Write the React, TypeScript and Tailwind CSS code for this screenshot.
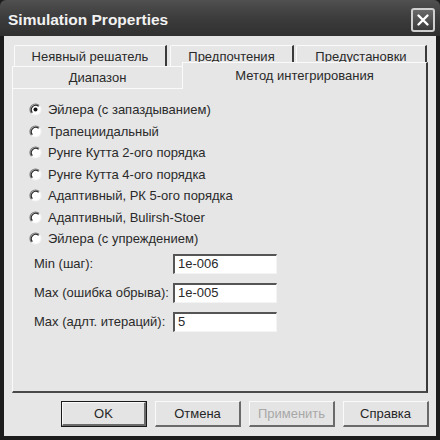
import React from "react";

function Radio({ checked }: { checked?: boolean }) {
  return (
    <svg width="13" height="13" viewBox="0 0 13 13" className="shrink-0">
      <circle cx="6.5" cy="6.5" r="5.5" fill="#ffffff" />
      <path d="M2.6 10.4 A5.5 5.5 0 0 1 10.4 2.6" fill="none" stroke="#7a7a7a" strokeWidth="1.2" />
      <path d="M3.4 9.6 A4.4 4.4 0 0 1 9.6 3.4" fill="none" stroke="#2a2a2a" strokeWidth="1.2" />
      <path d="M10.4 2.6 A5.5 5.5 0 0 1 2.6 10.4" fill="none" stroke="#f4f4f4" strokeWidth="1.2" />
      {checked && <circle cx="6.5" cy="6.5" r="2" fill="#111" />}
    </svg>
  );
}

function Btn({ label, def, disabled }: { label: string; def?: boolean; disabled?: boolean }) {
  return (
    <div
      className={
        "w-[86px] h-[26px] " +
        (def ? "border border-[#1a1a1a]" : "")
      }
    >
      <div className="w-full h-full border-t border-l border-t-[#fafafa] border-l-[#fafafa] border-b-2 border-r-2 border-b-[#6a6a6a] border-r-[#6a6a6a] bg-[#e4e4e4] flex items-center justify-center">
        <span className={"text-[13px] " + (disabled ? "text-[#a8a8a8]" : "text-[#262626]")}>{label}</span>
      </div>
    </div>
  );
}

function Field({ label, value }: { label: string; value: string }) {
  return (
    <div className="flex items-center h-[20px]">
      <span className="w-[139px] text-[13px] text-[#2a2a2a]">{label}</span>
      <div className="w-[104px] h-[20px] bg-white border-t-2 border-l-2 border-t-[#555] border-l-[#555] border-b border-r border-b-[#f4f4f4] border-r-[#f4f4f4] flex items-center pl-[3px]">
        <span className="text-[13px] text-[#2a2a2a]">{value}</span>
      </div>
    </div>
  );
}

export default function App() {
  const radios = [
    "Эйлера (с запаздыванием)",
    "Трапециидальный",
    "Рунге Кутта 2-ого порядка",
    "Рунге Кутта 4-ого порядка",
    "Адаптивный, РК 5-ого порядка",
    "Адаптивный, Bulirsh-Stoer",
    "Эйлера (с упреждением)",
  ];
  return (
    <div className="w-[440px] h-[440px] bg-[#1c1c1c] flex flex-col font-['Liberation_Sans',Arial,sans-serif]">
      <div className="h-[36px] shrink-0 flex items-center justify-between pl-[8px] pr-[5px] pt-[3px] bg-gradient-to-b from-[#505050] via-[#3c3c3c] to-[#303030] rounded-t-[6px]">
        <span className="text-[#f2f2f2] font-bold text-[15.5px]">Simulation Properties</span>
        <div className="w-[24px] h-[24px] rounded-[3px] border-2 border-[#cfcfcf] bg-gradient-to-b from-[#6a6a6a] to-[#3a3a3a] flex items-center justify-center">
          <svg width="14" height="14" viewBox="0 0 14 14">
            <path d="M2.5 2.5 L11.5 11.5 M11.5 2.5 L2.5 11.5" stroke="#ffffff" strokeWidth="2.4" strokeLinecap="round" />
          </svg>
        </div>
      </div>
      <div className="flex-1 mx-[4px] mb-[4px] bg-[#e6e6e6] flex flex-col px-[8px] pt-[9px]">
        <div className="flex h-[21px] pl-[2px]">
          <div className="w-[153px] border-t border-l border-t-[#fafafa] border-l-[#fafafa] border-r-2 border-r-[#3a3a3a] rounded-tl-[2px] flex items-center justify-center pt-[2px] text-[13px] text-[#2a2a2a]">
            Неявный решатель
          </div>
          <div className="w-[3px]" />
          <div className="w-[124px] border-t border-l border-t-[#fafafa] border-l-[#fafafa] border-r-2 border-r-[#3a3a3a] rounded-tl-[2px] flex items-center justify-center pt-[2px] text-[13px] text-[#2a2a2a]">
            Предпочтения
          </div>
          <div className="w-[2px]" />
          <div className="w-[131px] border-t border-l border-t-[#fafafa] border-l-[#fafafa] border-r-2 border-r-[#3a3a3a] rounded-tl-[2px] flex items-center justify-center pt-[2px] text-[13px] text-[#2a2a2a]">
            Предустановки
          </div>
        </div>
        <div className="flex h-[22px] items-end">
          <div className="w-[170px] h-[22px] border-t border-l border-t-[#fafafa] border-l-[#fafafa] flex items-center justify-center text-[13px] text-[#2a2a2a]">
            Диапазон
          </div>
          <div className="relative z-10 w-[246px] h-[27px] -mb-[1px] bg-[#e6e6e6] border-t border-l border-t-[#fafafa] border-l-[#fafafa] border-r-2 border-r-[#3a3a3a] flex items-start justify-center pt-[3px] text-[13px] text-[#2a2a2a]">
            Метод интегрирования
          </div>
        </div>
        <div className="h-[305px] border-t border-l border-t-[#fafafa] border-l-[#fafafa] border-b-2 border-r-2 border-b-[#4a4a4a] border-r-[#3a3a3a] pt-[10px] flex flex-col">
          <div className="flex flex-col pl-[16px]">
            {radios.map((r, i) => (
              <div key={r} className="h-[21.5px] flex items-center gap-[6px]">
                <Radio checked={i === 0} />
                <span className="text-[13px] text-[#2a2a2a]">{r}</span>
              </div>
            ))}
          </div>
          <div className="flex flex-col gap-[9px] mt-[4px] pl-[21px]">
            <Field label="Min (шаг):" value="1e-006" />
            <Field label="Max (ошибка обрыва):" value="1e-005" />
            <Field label="Max (адлт. итераций):" value="5" />
          </div>
        </div>
        <div className="flex justify-end gap-[8px] mt-[8px] -mr-[1px]">
          <Btn label="OK" def />
          <Btn label="Отмена" />
          <Btn label="Применить" disabled />
          <Btn label="Справка" />
        </div>
      </div>
    </div>
  );
}
